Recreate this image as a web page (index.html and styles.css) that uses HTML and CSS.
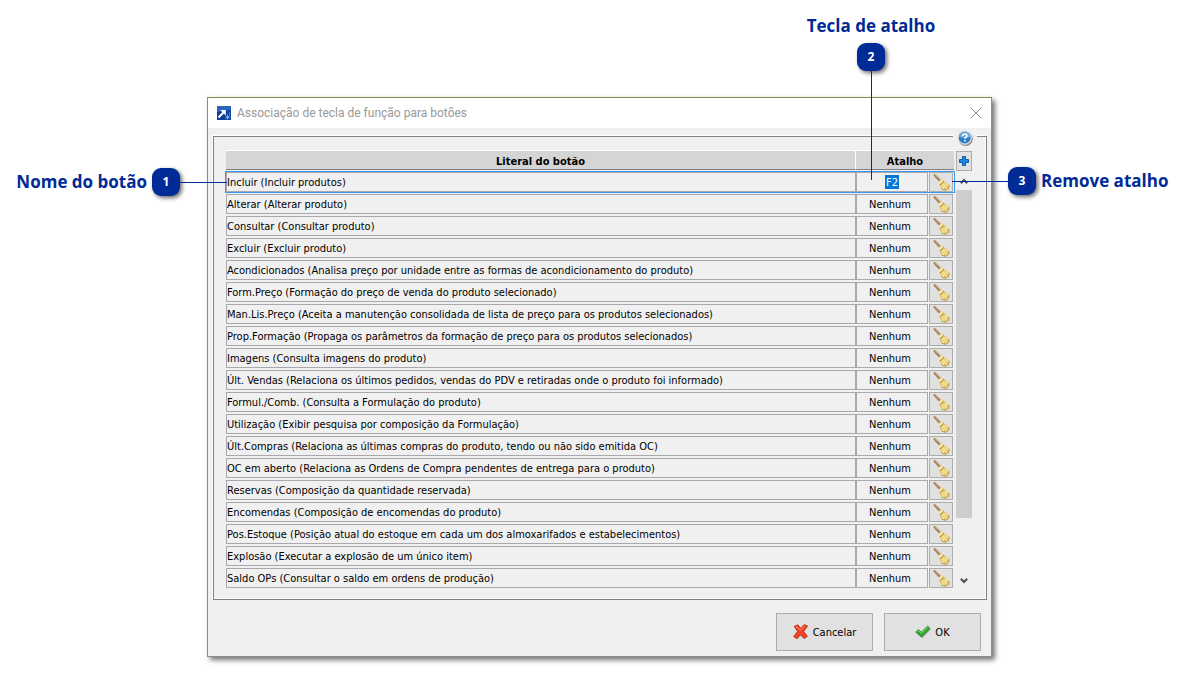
FILE: index.html
```html
<!DOCTYPE html>
<html lang="pt-BR">
<head>
    <meta charset="UTF-8">
    <meta name="viewport" content="width=device-width, initial-scale=1.0">
    <title>Associação de tecla de função para botões</title>
    <link rel="stylesheet" href="styles.css">
</head>
<body>
    <!-- Shared icons -->
    <svg class="sprite" aria-hidden="true">
        <symbol id="broom" viewBox="0 0 18 18">
            <path d="M1.200 2.200 2.800.800 9 6.800 7 8.800z" fill="#a98258"/>
            <path d="M2.600 1.300 8.600 7.200" stroke="#d3b08c" stroke-width=".8"/>
            <path d="M7 8.600 9.200 6.600 12.400 8.200 17 11.800 16.800 15.200 13.400 17.400 9.600 16.200 7.400 12z" fill="#dfc063"/>
            <path d="M6.600 8.800 9.200 6.400 11.600 8.400 8 12z" fill="#f3e3a6"/>
            <path d="M8 12 11.800 8.200" stroke="#b08a48"/>
            <path d="M9.600 12 12 16M11 10.800 14.600 15.400M12.600 10 16 12.800" stroke="#fbeeb4" stroke-width="1.200"/>
            <path d="M9.600 16.200 13.400 17.400 16.800 15.200 17 11.800" stroke="#b28f45" stroke-width=".8" fill="none"/>
        </symbol>
    </svg>

    <main class="page">
        <div class="callout callout-left">
            <span class="callout-label">Nome do botão</span>
            <span class="badge badge-left">1</span>
        </div>

        <div class="center">
            <div class="callout callout-top">
                <span class="callout-label">Tecla de atalho</span>
                <span class="badge badge-top">2</span>
            </div>

            <section class="window">
                <header class="titlebar">
                    <svg class="app-icon" viewBox="0 0 14 14" aria-hidden="true">
                        <rect width="14" height="14" fill="#0b3f97"/>
                        <path d="M0 0h14v4L0 6z" fill="#2b64bd"/>
                        <path d="M1.500 11.500 7.200 5.800" fill="none" stroke="#fff" stroke-width="2"/>
                        <path d="M3.200 4h5.600v5.600z" fill="#fff"/>
                        <path d="M10.500 8.500v5M8.300 9.800l4.600 2.400M12.900 9.600l-4.600 3M12.600 6.500v2" stroke="#9dbce9" stroke-width=".8"/>
                    </svg>
                    <h1 class="title">Associação de tecla de função para botões</h1>
                    <button class="close" type="button" aria-label="Fechar">
                        <svg viewBox="0 0 12 12"><path d="M.8.8 11.200 11.200M11.200.8.8 11.200" stroke="#888" fill="none"/></svg>
                    </button>
                </header>

                <div class="frame">
                    <button class="help" type="button" aria-label="Ajuda">
                        <svg viewBox="0 0 16 16">
                            <circle cx="8.600" cy="8.800" r="7.200" fill="#8b8b8b"/>
                            <circle cx="7.700" cy="7.700" r="7.200" fill="#d3dae0"/>
                            <circle cx="7.700" cy="7.700" r="5.900" fill="#2d7dc9"/>
                            <path d="M2.200 7a5.600 5.600 0 0 1 11 0q-5.500 2-11 0z" fill="#74aee3"/>
                            <path d="M5.700 6q0-2 2.100-2t2.100 1.700q0 1.200-1.100 1.700-.9.500-.9 1.500M7.900 10.100v1.500" fill="none" stroke="#fff" stroke-width="1.500"/>
                        </svg>
                    </button>

                    <table class="grid">
                        <thead>
                            <tr>
                                <th class="col-name">Literal do botão</th>
                                <th class="col-shortcut" colspan="2">Atalho</th>
                            </tr>
                        </thead>
                        <tbody id="rows"></tbody>
                    </table>

                    <div class="side">
                        <button class="add" type="button" aria-label="Adicionar">
                            <svg viewBox="0 0 10 10"><path d="M3.500.5h3v3h3v3h-3v3h-3v-3h-3v-3h3z" fill="#1f86e0" stroke="#0d5cb0"/></svg>
                        </button>
                        <div class="scrollbar">
                            <button class="arrow" type="button" aria-label="Subir">
                                <svg viewBox="0 0 8 6"><path d="M.8 5.200 4 2 7.200 5.200" fill="none" stroke="#505050" stroke-width="2"/></svg>
                            </button>
                            <div class="track"><div class="thumb"></div></div>
                            <button class="arrow" type="button" aria-label="Descer">
                                <svg viewBox="0 0 8 6"><path d="M.8.8 4 4 7.200.8" fill="none" stroke="#505050" stroke-width="2"/></svg>
                            </button>
                        </div>
                    </div>
                </div>

                <footer class="actions">
                    <button class="action" type="button">
                        <svg viewBox="0 0 16 16" aria-hidden="true">
                            <path d="M2.500 2.500 5.500 1.500 8.200 5 11.500 1.200 14.500 2.500 11 7.800 14.700 13 11.500 15 8 11.200 4.500 15.200 1.500 13 5.200 8z" fill="#777" opacity=".45"/>
                            <path d="M1.200 2.200 4.800.8 7.700 4.200 11.200.6 14.600 2 10.600 7.300 14.400 12.200 11 14.600 7.400 10.800 3.900 14.800.6 12.500 4.500 7.500z" fill="#ee4422" stroke="#b82a18" stroke-width=".8"/>
                            <path d="M2.600 2.300 7.600 6 11.500 1.900" stroke="#ff9377" fill="none"/>
                        </svg>
                        Cancelar
                    </button>
                    <button class="action" type="button">
                        <svg viewBox="0 0 16 16" aria-hidden="true">
                            <path d="M1.500 9 4.300 6.500 7 9.300 13.200 3.200 15.700 5.500 7.300 14.300z" fill="#777" opacity=".5"/>
                            <path d="M.8 8 3.600 5.600 6.300 8.300 12.600 2.200 15 4.500 6.500 13z" fill="#31a92c" stroke="#1d7f1d" stroke-width=".8"/>
                            <path d="M2.200 7.700 3.600 6.600 6.300 9.400 12.600 3.300" stroke="#83d977" fill="none"/>
                        </svg>
                        OK
                    </button>
                </footer>
            </section>
        </div>

        <div class="callout callout-right">
            <span class="badge badge-right">3</span>
            <span class="callout-label">Remove atalho</span>
        </div>
    </main>

    <script>
        const buttons = [
            ['Incluir (Incluir produtos)', 'F2'],
            ['Alterar (Alterar produto)', 'Nenhum'],
            ['Consultar (Consultar produto)', 'Nenhum'],
            ['Excluir (Excluir produto)', 'Nenhum'],
            ['Acondicionados (Analisa preço por unidade entre as formas de acondicionamento do produto)', 'Nenhum'],
            ['Form.Preço (Formação do preço de venda do produto selecionado)', 'Nenhum'],
            ['Man.Lis.Preço (Aceita a manutenção consolidada de lista de preço para os produtos selecionados)', 'Nenhum'],
            ['Prop.Formação (Propaga os parâmetros da formação de preço para os produtos selecionados)', 'Nenhum'],
            ['Imagens (Consulta imagens do produto)', 'Nenhum'],
            ['Últ. Vendas (Relaciona os últimos pedidos, vendas do PDV e retiradas onde o produto foi informado)', 'Nenhum'],
            ['Formul./Comb. (Consulta a Formulação do produto)', 'Nenhum'],
            ['Utilização (Exibir pesquisa por composição da Formulação)', 'Nenhum'],
            ['Últ.Compras (Relaciona as últimas compras do produto, tendo ou não sido emitida OC)', 'Nenhum'],
            ['OC em aberto (Relaciona as Ordens de Compra pendentes de entrega para o produto)', 'Nenhum'],
            ['Reservas (Composição da quantidade reservada)', 'Nenhum'],
            ['Encomendas (Composição de encomendas do produto)', 'Nenhum'],
            ['Pos.Estoque (Posição atual do estoque em cada um dos almoxarifados e estabelecimentos)', 'Nenhum'],
            ['Explosão (Executar a explosão de um único item)', 'Nenhum'],
            ['Saldo OPs (Consultar o saldo em ordens de produção)', 'Nenhum']
        ];

        document.getElementById('rows').innerHTML = buttons.map(([name, key], i) => `
            <tr class="${i === 0 ? 'selected' : ''}">
                <td class="name" id="name${i}">${name}</td>
                <td class="shortcut"><input type="text" value="${key}" aria-labelledby="name${i}"></td>
                <td class="clear">
                    <button type="button" aria-label="Remover atalho"><svg><use href="#broom"/></svg></button>
                </td>
            </tr>`).join('');
    </script>
</body>
</html>
```
FILE: styles.css
```css
* {
    margin: 0;
    padding: 0;
    box-sizing: border-box;
}

body {
    font-family: 'DejaVu Sans Condensed', 'DejaVu Sans', sans-serif;
    font-size: 11px;
    background: #fff;
    color: #000;
}

button,
input {
    font: inherit;
    color: inherit;
    border: none;
    background: none;
}

svg {
    display: block;
}

.sprite {
    position: absolute;
    width: 0;
    height: 0;
}

.page {
    display: flex;
    align-items: flex-start;
    padding-bottom: 16px;
}

.center {
    flex: 1;
    min-width: 0;
    display: flex;
    flex-direction: column;
}

/* Callouts */
.callout {
    display: flex;
    align-items: center;
    gap: 5px;
    color: #002b96;
}

.callout-label {
    font-family: 'Open Sans', sans-serif;
    font-size: 17px;
    line-height: 24px;
    font-weight: bold;
    white-space: nowrap;
}

.callout-left {
    width: 207px;
    margin-top: 168px;
    padding-right: 27px;
    justify-content: flex-end;
}

.callout-right {
    width: 196px;
    margin-top: 167px;
    padding-left: 16px;
}

.callout-top {
    flex-direction: column;
    align-self: flex-end;
    width: 130px;
    height: 97px;
    margin-right: 56px;
    padding-top: 14px;
}

.badge {
    position: relative;
    flex: none;
    width: 28px;
    height: 28px;
    border-radius: 9px;
    background: #002b96;
    box-shadow: 2px 2px 4px rgba(0, 0, 0, 0.6);
    color: #fff;
    font-family: 'Open Sans', sans-serif;
    font-size: 12px;
    font-weight: bold;
    line-height: 28px;
    text-align: center;
}

/* Leader lines that run over the window */
.badge::after {
    content: '';
    position: absolute;
    z-index: 1;
    background: #002b96;
}

.badge-left::after {
    left: 100%;
    top: 14px;
    width: 47px;
    height: 1px;
}

.badge-top::after {
    left: 14px;
    top: 100%;
    width: 1px;
    height: 109px;
}

.badge-right::after {
    right: 100%;
    top: 14px;
    width: 56px;
    height: 1px;
}

/* Window */
.window {
    background: #f0f0f0;
    border: 1px solid #8c8c8c;
    border-top-color: #7e8c4e;
    box-shadow: 3px 3px 5px rgba(0, 0, 0, 0.55);
}

.titlebar {
    display: flex;
    align-items: center;
    gap: 6px;
    height: 30px;
    padding: 0 9px;
    background: #fff;
}

.app-icon {
    width: 14px;
    height: 14px;
}

.title {
    flex: 1;
    font-family: Roboto, sans-serif;
    font-size: 12px;
    font-weight: normal;
    color: #999;
}

.close svg {
    width: 12px;
    height: 12px;
}

.frame {
    position: relative;
    display: flex;
    gap: 2px;
    margin: 8px 4px 0 5px;
    padding: 11px 14px 9px 12px;
    border: 1px solid #808080;
    box-shadow: -1px -1px 0 #fff, inset -1px -1px 0 #fff;
}

.help {
    position: absolute;
    top: -7px;
    right: 9px;
    padding: 0 4px;
    background: #f0f0f0;
}

.help svg {
    width: 16px;
    height: 16px;
}

.grid {
    flex: 1;
    table-layout: fixed;
    border-spacing: 0 2px;
}

.grid th {
    height: 20px;
    padding-top: 2px;
    background: #d5d5d5;
    border-top: 1px solid #fff;
    border-bottom: 1px solid #808080;
    border-right: 1px solid #fff;
    font-weight: bold;
}

.grid .col-shortcut {
    width: 98px;
    border-right: none;
}

.grid td {
    height: 20px;
}

.grid .name,
.grid .shortcut {
    border: 1px solid #a9a9ad;
    white-space: nowrap;
    overflow: hidden;
}

.grid .shortcut {
    width: 72px;
    text-align: center;
}

.shortcut input {
    display: block;
    width: 56px;
    height: 14px;
    margin: 0 auto;
    padding-right: 4px;
    text-align: center;
}

.clear {
    width: 26px;
    padding-left: 1px;
}

.clear button {
    display: flex;
    align-items: center;
    justify-content: center;
    width: 24px;
    height: 20px;
    border: 1px solid #adadad;
    background: #e1e1e1;
}

.clear svg {
    width: 18px;
    height: 18px;
}

.selected {
    outline: 1px solid #3b97ee;
}

.selected .shortcut input {
    width: 14px;
    padding: 0;
    background: #0078d7;
    color: #fff;
}

/* Add button and scrollbar */
.side {
    display: flex;
    flex-direction: column;
    width: 16px;
    padding-top: 3px;
}

.add {
    display: flex;
    align-items: center;
    justify-content: center;
    height: 20px;
    border: 1px solid #adadad;
    background: #e1e1e1;
}

.add svg {
    width: 10px;
    height: 10px;
}

.scrollbar {
    flex: 1;
    display: flex;
    flex-direction: column;
}

.arrow {
    display: flex;
    align-items: center;
    justify-content: center;
    height: 19px;
}

.arrow svg {
    width: 8px;
    height: 6px;
}

.track {
    flex: 1;
}

.thumb {
    height: 86%;
    background: #cdcdcd;
}

.actions {
    display: flex;
    justify-content: flex-end;
    gap: 11px;
    padding: 13px 10px 5px;
}

.action {
    display: flex;
    align-items: center;
    justify-content: center;
    gap: 4px;
    width: 97px;
    height: 38px;
    border: 1px solid #adadad;
    background: #e1e1e1;
}

.action svg {
    width: 16px;
    height: 16px;
}
```
